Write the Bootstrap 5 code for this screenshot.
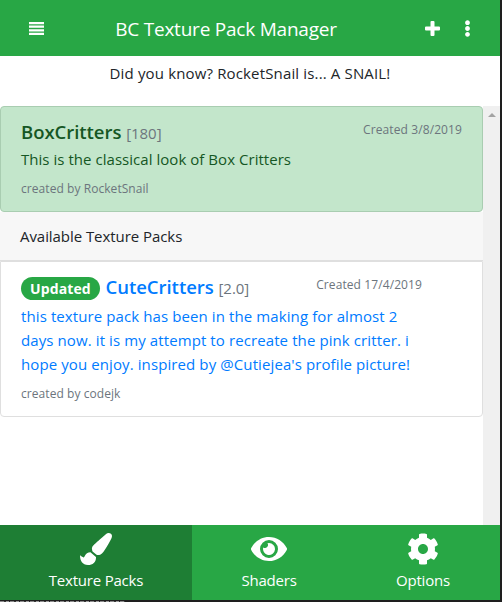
<!DOCTYPE html>
<html lang="en">
<head>
<meta charset="utf-8">
<meta name="viewport" content="width=device-width, initial-scale=1">
<title>BC Texture Pack Manager</title>
<link href="https://cdn.jsdelivr.net/npm/bootstrap@5.3.0/dist/css/bootstrap.min.css" rel="stylesheet">
<style>
  html, body { height: 602px; overflow: hidden; }
  body { background: #1e1e1e; color: #212529; font-family: "Open Sans", "Noto Sans", sans-serif; font-size: 15px; line-height: 24px; }
  .popup { width: 500px; height: 600px; background: #fff; }
  .topbar { height: 56px; background: #28a745; padding: 0 29px; }
  .topbar svg, .tabs svg { fill: currentColor; display: block; }
  .app-title { font-size: 19px; line-height: 30px; padding-top: 2px; margin-right: 17px; letter-spacing: -.22px; }
  .tip { height: 50px; padding-top: 5px; letter-spacing: .15px; }
  .scroller { height: 419px; min-height: 0; }
  .packs { width: 483px; }
  .track { width: 17px; background: #f0f0f0; padding-top: 7px; }
  .arrow { width: 0; height: 0; margin: 0 auto; border: 4px solid transparent; border-top: 0; border-bottom-color: #a3a3a3; }
  .pack { border: 1px solid #dfdfdf; border-radius: 4px; padding: 11px 20px 12px; }
  .pack.chosen { background: #c3e6cb; border-color: #a9cdb1; color: #155724; height: 106px; }
  .pack.offered { color: #007bff; height: 156px; border-radius: 0 0 4px 4px; }
  .about { letter-spacing: .04px; }
  .offered .about { letter-spacing: .1px; margin-top: 2px; }
  .pack-name { font-size: 18.5px; font-weight: 600; line-height: 28px; letter-spacing: -.04px; }
  .ver { font-size: 15px; font-weight: 400; color: #6c757d; }
  .fine { font-size: 12px; line-height: 20px; color: #6c757d; letter-spacing: .1px; }
  .when { margin-top: 2px; }
  .offered .when { margin-right: 40px; }
  .by { margin-top: 8px; letter-spacing: .06px; }
  .section-head { height: 49px; background: #f7f7f7; padding: 12px 20px; border-bottom: 1px solid #dfdfdf; letter-spacing: -.06px; }
  .pill { display: inline-block; background: #28a745; color: #fff; font-size: 14px; font-weight: 700; line-height: 23px; padding: 0 9px; border-radius: 12px; letter-spacing: .12px; margin-right: 1px; }
  .tabs { height: 75px; background: #28a745; letter-spacing: -.2px; }
  .tab { width: 154px; padding-top: 8px; gap: 3px; }
  .tab.current { width: 192px; background: #1e7e34; }
  .strip { width: 125px; height: 1px; margin-top: 1px; background: repeating-linear-gradient(90deg, #8a8a8a 0 4px, #3a3a3a 4px 6px, #9a9a9a 6px 9px, #2a2a2a 9px 10px); }
</style>
</head>
<body>
<div class="popup d-flex flex-column">
  <header class="topbar d-flex align-items-center justify-content-between text-white">
    <svg width="15" height="13" viewBox="0 0 15 13"><path d="M0 0h15v2.2H0zM0 3.6h15v2.2H0zM0 7.2h15v2.2H0zM0 10.8h15v2.2H0z"/></svg>
    <div class="app-title">BC Texture Pack Manager</div>
    <div class="d-flex align-items-center">
      <svg width="15" height="15" viewBox="0 0 15 15"><path d="M6.5 0h2q1 0 1 1v4.500h4.500q1 0 1 1v2q0 1-1 1H9.500V14q0 1-1 1h-2q-1 0-1-1V9.500H1q-1 0-1-1v-2q0-1 1-1h4.500V1q0-1 1-1z"/></svg>
      <svg class="ms-4" width="7" height="17" viewBox="0 0 192 512"><path d="M96 184c39.8 0 72 32.2 72 72s-32.2 72-72 72-72-32.2-72-72 32.2-72 72-72zM24 80c0 39.8 32.2 72 72 72s72-32.2 72-72S135.8 8 96 8 24 40.2 24 80zm0 352c0 39.8 32.2 72 72 72s72-32.2 72-72-32.2-72-72-72-72 32.2-72 72z"/></svg>
    </div>
  </header>
  <div class="tip text-center">Did you know? RocketSnail is... A SNAIL!</div>
  <main class="scroller d-flex">
    <div class="packs">
      <article class="pack chosen">
        <div class="d-flex justify-content-between">
          <div class="pack-name">BoxCritters <span class="ver">[180]</span></div>
          <span class="fine when">Created 3/8/2019</span>
        </div>
        <div class="about">This is the classical look of Box Critters</div>
        <div class="fine by">created by RocketSnail</div>
      </article>
      <div class="section-head">Available Texture Packs</div>
      <article class="pack offered">
        <div class="d-flex justify-content-between">
          <div class="pack-name"><span class="pill">Updated</span> CuteCritters <span class="ver">[2.0]</span></div>
          <span class="fine when">Created 17/4/2019</span>
        </div>
        <div class="about">this texture pack has been in the making for almost 2<br>days now. it is my attempt to recreate the pink critter. i<br>hope you enjoy. inspired by @Cutiejea's profile picture!</div>
        <div class="fine by">created by codejk</div>
      </article>
    </div>
    <div class="track"><div class="arrow"></div></div>
  </main>
  <nav class="tabs d-flex text-white text-center">
    <div class="tab current d-flex flex-column align-items-center">
      <svg width="32" height="32" viewBox="0 0 512 512"><path d="M167.02 309.34c-40.12 2.58-76.53 17.86-97.19 72.3-2.35 6.21-8 9.98-14.59 9.98-11.11 0-45.46-27.67-55.25-34.35C0 439.62 37.93 512 128 512c75.86 0 128-43.77 128-120.19 0-3.11-.65-6.08-.97-9.13l-88.01-73.34zM457.89 0c-15.16 0-29.37 6.71-40.21 16.45C213.27 199.05 192 203.34 192 257.09c0 13.7 3.25 26.76 8.73 38.7l63.82 53.18c7.21 1.8 14.64 3.03 22.39 3.03 62.11 0 98.11-45.47 211.16-256.46 7.38-14.35 13.9-29.85 13.9-45.99C512 20.64 486 0 457.89 0z"/></svg>
      <span>Texture Packs</span>
    </div>
    <div class="tab d-flex flex-column align-items-center">
      <svg width="36" height="32" viewBox="0 0 576 512"><path d="M572.52 241.4C518.29 135.59 410.93 64 288 64S57.68 135.64 3.48 241.41a32.35 32.35 0 0 0 0 29.19C57.71 376.41 165.07 448 288 448s230.32-71.64 284.52-177.41a32.35 32.35 0 0 0 0-29.19zM288 400a144 144 0 1 1 144-144 143.93 143.93 0 0 1-144 144zm0-240a95.31 95.31 0 0 0-25.31 3.79 47.85 47.85 0 0 1-66.9 66.9A95.78 95.78 0 1 0 288 160z"/></svg>
      <span>Shaders</span>
    </div>
    <div class="tab d-flex flex-column align-items-center">
      <svg width="32" height="32" viewBox="0 0 512 512"><path d="M487.4 315.7l-42.6-24.6c4.3-23.2 4.3-47 0-70.2l42.6-24.6c4.9-2.8 7.1-8.6 5.5-14-11.1-35.6-30-67.8-54.7-94.6-3.8-4.1-10-5.1-14.8-2.3L380.8 110c-17.9-15.4-38.5-27.3-60.8-35.1V25.8c0-5.6-3.9-10.5-9.4-11.7-36.7-8.2-74.3-7.8-109.2 0-5.5 1.2-9.4 6.1-9.4 11.7V75c-22.2 7.9-42.8 19.8-60.8 35.1L88.7 85.5c-4.9-2.8-11-1.9-14.8 2.3-24.7 26.7-43.6 58.9-54.7 94.6-1.7 5.4.6 11.2 5.5 14L67.3 221c-4.3 23.2-4.3 47 0 70.2l-42.6 24.6c-4.9 2.8-7.1 8.6-5.5 14 11.1 35.6 30 67.8 54.7 94.6 3.8 4.1 10 5.1 14.8 2.3l42.6-24.6c17.9 15.4 38.5 27.3 60.8 35.1v49.2c0 5.6 3.9 10.5 9.4 11.7 36.7 8.2 74.3 7.8 109.2 0 5.5-1.2 9.4-6.1 9.4-11.7v-49.2c22.2-7.9 42.8-19.8 60.8-35.1l42.6 24.6c4.9 2.8 11 1.9 14.8-2.3 24.7-26.7 43.6-58.9 54.7-94.6 1.5-5.5-.7-11.3-5.6-14.1zM256 336c-44.1 0-80-35.9-80-80s35.9-80 80-80 80 35.9 80 80-35.9 80-80 80z"/></svg>
      <span>Options</span>
    </div>
  </nav>
</div>
<div class="strip"></div>
<script src="https://cdn.jsdelivr.net/npm/bootstrap@5.3.0/dist/js/bootstrap.bundle.min.js"></script>
</body>
</html>
